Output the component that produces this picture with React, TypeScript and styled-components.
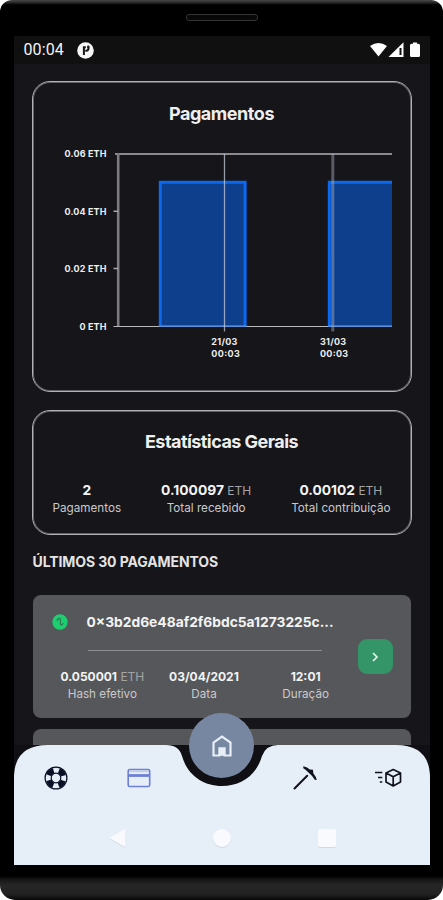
import React from "react";
import styled, { createGlobalStyle } from "styled-components";

const GlobalStyle = createGlobalStyle`
  * { box-sizing: border-box; }
  body { margin: 0; background: #fff; font-family: Inter, "Liberation Sans", sans-serif; }
`;

const Phone = styled.div`
  width: 443px;
  height: 900px;
  display: flex;
  flex-direction: column;
  align-items: center;
  background: linear-gradient(#484848 0, #303030 2px, #000 5px, #000 876px, #181818 880px, #262626 885px, #222 894px, #080808 900px);
  border-radius: 12px 12px 15px 15px;
  overflow: hidden;
`;

const Earpiece = styled.div`
  width: 72px;
  height: 7px;
  margin: 14px 0 15px;
  border: 1.5px solid #343434;
  border-radius: 3px;
  background: #080808;
`;

const Screen = styled.div`
  width: 416px;
  height: 829px;
  display: flex;
  flex-direction: column;
  background: #15151a;
  overflow: hidden;
`;

const StatusBar = styled.header`
  height: 28px;
  flex: none;
  display: flex;
  align-items: center;
  padding: 0 8px 0 9px;
  background: #101011;
  color: #f4f4f4;
`;

const Clock = styled.span`
  width: 54px;
  padding-left: 1px;
  font: 400 16px/28px Roboto, sans-serif;
  letter-spacing: 0.1px;
`;

const StatusIcons = styled.div`
  display: flex;
  align-items: center;
  margin-left: auto;
`;

const Content = styled.main`
  height: 681px;
  flex: none;
  padding: 17px 18px 0;
  overflow: hidden;
`;

const Card = styled.section<{ $height: number }>`
  height: ${(p) => p.$height}px;
  padding: 1px;
  border: 1px solid #b2b2b5;
  box-shadow: inset 0 0 0 1px #606065;
  border-radius: 18px;
  margin-bottom: 18px;
  overflow: hidden;
`;

const CardTitle = styled.h2<{ $top: number; $spacing: number }>`
  margin: ${(p) => p.$top}px 0 0;
  font-size: 18px;
  line-height: 24px;
  font-weight: 700;
  letter-spacing: ${(p) => p.$spacing}px;
  text-align: center;
  color: #eee;
`;

const Chart = styled.svg`
  display: block;
  width: 376px;
  height: 240px;
  text { font: 700 9px Inter, sans-serif; fill: #eee; }
`;

const Totals = styled.div`
  display: flex;
  justify-content: space-between;
  padding: 0 19px;
  margin-top: 27px;
`;

const StatBox = styled.div`
  display: flex;
  flex-direction: column;
  align-items: center;
  white-space: nowrap;
`;

const Value = styled.div<{ $size: number }>`
  height: 19px;
  font-size: ${(p) => p.$size}px;
  line-height: 19px;
  font-weight: 700;
  color: #f3f3f3;
`;

const Unit = styled.span`
  font-size: 12px;
  font-weight: 400;
  color: #a4a4a6;
`;

const Label = styled.div<{ $size: number }>`
  font-size: ${(p) => p.$size}px;
  line-height: 16px;
  color: #c9c9cb;
`;

const SectionTitle = styled.h3`
  margin: 0 0 24px;
  padding-left: 1px;
  font-size: 14px;
  line-height: 18px;
  font-weight: 700;
  letter-spacing: -0.1px;
  color: #e4e4e4;
`;

const PaymentCard = styled.article`
  width: 378px;
  height: 123px;
  margin: 0 1px 11px;
  padding: 0 18px;
  display: flex;
  align-items: center;
  justify-content: space-between;
  background: #56575a;
  border-radius: 8px;
`;

const PaymentBody = styled.div`
  width: 306px;
  height: 123px;
  padding-top: 17px;
`;

const HashLine = styled.div`
  height: 20px;
  display: flex;
  align-items: center;
  padding-left: 1px;
  gap: 19px;
`;

const Hash = styled.span`
  font-size: 13.8px;
  font-weight: 700;
  color: #f3f3f3;
  white-space: nowrap;
`;

const Divider = styled.div`
  width: 234px;
  height: 1px;
  margin: 18px 0 16px 37px;
  background: #8c8d8f;
`;

const PaymentStats = styled.div`
  display: grid;
  grid-template-columns: repeat(3, 1fr);
  padding-left: 1px;
`;

const OpenButton = styled.button`
  width: 35px;
  height: 35px;
  display: grid;
  place-items: center;
  padding: 0;
  border: 0;
  border-radius: 9px;
  background: #349568;
`;

const Footer = styled.footer`
  height: 120px;
  flex: none;
  position: relative;
  background: #101014;
`;

const BarShape = styled.svg`
  position: absolute;
  inset: 0;
`;

const Tabs = styled.nav`
  position: relative;
  display: grid;
  grid-template-columns: repeat(5, 83px);
  height: 65px;
  padding-left: 1px;
  align-items: center;
  justify-items: center;
`;

const HomeButton = styled.button`
  position: absolute;
  left: 175.5px;
  top: -32px;
  width: 65px;
  height: 65px;
  display: grid;
  place-items: center;
  padding: 0;
  border: 0;
  border-radius: 50%;
  background: #7786a1;
`;

const SystemNav = styled.div`
  position: relative;
  height: 55px;
  display: flex;
  justify-content: space-between;
  align-items: center;
  padding: 0 93px;
  svg { filter: drop-shadow(0 1px 0.5px #d3dae4); }
`;

interface StatProps {
  value: string;
  unit?: string;
  label: string;
  size?: number;
  labelSize?: number;
}

const Stat = ({ value, unit, label, size = 13.8, labelSize = 11.7 }: StatProps) => (
  <StatBox>
    <Value $size={size}>
      {value}
      {unit && <Unit> {unit}</Unit>}
    </Value>
    <Label $size={labelSize}>{label}</Label>
  </StatBox>
);

const yTicks = [
  { y: 154, text: "0.06 ETH", width: 42 },
  { y: 211.5, text: "0.04 ETH", width: 42 },
  { y: 269, text: "0.02 ETH", width: 42 },
  { y: 326.5, text: "0 ETH", width: 27 },
];

const PaymentsChart = () => (
  <Chart viewBox="34 126 376 240">
    <path d="M159 181H246.5V326.5H159Z" fill="#0d3f8c" />
    <path d="M328 181H392V326.5H328Z" fill="#0d3f8c" />
    <path d="M160.3 326V182.2H245V326M329.3 326V182.2H392" fill="none" stroke="#0c68ee" strokeWidth="3" />
    <path d="M115 154H392" stroke="#8b8b8e" strokeWidth="2" />
    <path d="M118.2 153V327" stroke="#7d7d80" strokeWidth="2.6" />
    <path d="M113.5 211.2H118M113.5 268.5H118" stroke="#a7a7a9" strokeWidth="1.5" />
    <path d="M113.5 326.5H392" stroke="#b8b8ba" strokeWidth="1.2" />
    <path d="M159 326H246.5M328 326H392" stroke="#3b82e8" strokeWidth="1.6" />
    <path d="M224.5 154V331.5" stroke="#c5cbd5" strokeOpacity="0.75" strokeWidth="1.3" />
    <path d="M332.8 154V331.5" stroke="#a7abb5" strokeOpacity="0.48" strokeWidth="3" />
    {yTicks.map((t) => (
      <text key={t.text} x={106.500 - t.width} y={t.y + 3.2} textLength={t.width}>{t.text}</text>
    ))}
    <text x="211.3" y="345.3" textLength="26">21/03</text>
    <text x="211.3" y="356.5" textLength="28.5">00:03</text>
    <text x="320" y="345.3" textLength="26">31/03</text>
    <text x="320" y="356.5" textLength="28">00:03</text>
  </Chart>
);

const AppBadge = () => (
  <svg width="17" height="17" viewBox="0 0 17 17">
    <circle cx="8.5" cy="8.5" r="8.3" fill="#f5f5f5" />
    <path d="M6.9 13V4.2M7 5.300H8.800M8.200 8.700H9.200Q11.600 8.700 11.600 5.500" fill="none" stroke="#151515" strokeWidth="2" />
    <circle cx="11.300" cy="4.900" r="1.300" fill="#151515" />
  </svg>
);

const DeviceStatus = () => (
  <svg width="53" height="18" viewBox="0 0 53 18">
    <path d="M1 5Q9.500 -1 18 5L9.500 15.500Z" fill="#fff" />
    <path d="M19.500 16 34.500 1.200V16Z" fill="#fff" />
    <path d="M31.500 7V14" stroke="#101011" strokeWidth="2" />
    <path d="M44 1.500H48V2.800H49.500Q51 2.800 51 4.300V14.500Q51 16 49.500 16H42.500Q41 16 41 14.500V4.300Q41 2.800 42.500 2.800H44Z" fill="#fff" />
  </svg>
);

const LinkBadge = () => (
  <svg width="16" height="16" viewBox="0 0 16 16">
    <circle cx="8" cy="8" r="7.700" fill="#1dce70" />
    <path d="M5 6.300 7 4.400Q8.800 4.200 8.400 6V10Q8.600 11.800 10.300 10.500L11 9.500" fill="none" stroke="#2b7a4e" strokeWidth="1.200" strokeLinecap="round" />
  </svg>
);

const ChevronIcon = () => (
  <svg width="10" height="12" viewBox="0 0 10 12">
    <path d="M3 2 7 6 3 10" fill="none" stroke="#e7f4ec" strokeWidth="1.700" />
  </svg>
);

const LifebuoyIcon = () => (
  <svg width="26" height="26" viewBox="0 0 26 26">
    <circle cx="13" cy="13" r="10.900" fill="#e6eef8" stroke="#0a0f25" strokeWidth="1.200" />
    <circle cx="13" cy="13" r="7.700" fill="none" stroke="#0a0f25" strokeWidth="5.400" strokeDasharray="6.800 5.294" strokeDashoffset="-2.650" />
    <circle cx="13" cy="13" r="4.800" fill="#e6eef8" stroke="#0a0f25" strokeWidth="1.200" />
  </svg>
);

const CardIcon = () => (
  <svg width="26" height="22" viewBox="0 0 26 22">
    <rect x="2.200" y="2.500" width="21.500" height="17" rx="1.500" fill="none" stroke="#6d7fd6" strokeWidth="1.600" />
    <path d="M2.500 8.500H23.500" stroke="#6d7fd6" strokeWidth="2.800" />
    <path d="M3 4.500H23" stroke="#bdc9ee" strokeWidth="1.200" />
  </svg>
);

const PickaxeIcon = () => (
  <svg width="26" height="26" viewBox="0 0 26 26">
    <path d="M2.500 23.500 15.200 10.800" stroke="#10131f" strokeWidth="2" strokeLinecap="round" />
    <path d="M11.300 1.200Q15.500 2.200 17.800 4.500L21 4.700L21.300 8.200Q24 11.500 24.800 15L22.800 14.700Q21 11.500 17.500 8.600Q14.500 5 11.300 3.300Z" fill="#10131f" />
  </svg>
);

const ShippingIcon = () => (
  <svg width="28" height="20" viewBox="0 0 28 20">
    <path d="M1 4.500H8.300M4 9.500H8.300M5.800 14H8.300" stroke="#10131f" strokeWidth="1.600" />
    <path d="M19.200 1.500 26.500 5V14L19.200 18 12 14V5ZM12 5 19.200 8.700 26.500 5M19.200 8.700V18" fill="none" stroke="#10131f" strokeWidth="1.700" strokeLinejoin="round" />
  </svg>
);

const HomeIcon = () => (
  <svg width="22" height="24" viewBox="0 0 22 24">
    <path d="M2.500 21.500V8.500L11 2.700 19.500 8.500V21.500H13.600V14.300H8.400V21.500Z" fill="none" stroke="#e8eef6" strokeWidth="2.200" />
    <path d="M9 15H13V21.800H9Z" fill="#e8eef6" />
  </svg>
);

export default function App() {
  return (
    <>
      <GlobalStyle />
      <Phone>
        <Earpiece />
        <Screen>
          <StatusBar>
            <Clock>00:04</Clock>
            <AppBadge />
            <StatusIcons><DeviceStatus /></StatusIcons>
          </StatusBar>
          <Content>
            <Card $height={311}>
              <CardTitle $top={19} $spacing={-0.45}>Pagamentos</CardTitle>
              <PaymentsChart />
            </Card>
            <Card $height={125}>
              <CardTitle $top={18} $spacing={-0.55}>Estatísticas Gerais</CardTitle>
              <Totals>
                <Stat value="2" label="Pagamentos" />
                <Stat value="0.100097" unit="ETH" label="Total recebido" />
                <Stat value="0.00102" unit="ETH" label="Total contribuição" />
              </Totals>
            </Card>
            <SectionTitle>ÚLTIMOS 30 PAGAMENTOS</SectionTitle>
            <PaymentCard>
              <PaymentBody>
                <HashLine>
                  <LinkBadge />
                  <Hash>0×3b2d6e48af2f6bdc5a1273225c...</Hash>
                </HashLine>
                <Divider />
                <PaymentStats>
                  <Stat size={12} value="0.050001" unit="ETH" label="Hash efetivo" />
                  <Stat size={12} value="03/04/2021" label="Data" />
                  <Stat size={12} value="12:01" label="Duração" />
                </PaymentStats>
              </PaymentBody>
              <OpenButton aria-label="Abrir"><ChevronIcon /></OpenButton>
            </PaymentCard>
            <PaymentCard />
          </Content>
          <Footer>
            <BarShape width="416" height="120" viewBox="0 0 416 120">
              <path d="M0 120V33Q0 0 34 0H152Q165 0 168 11C173 29 188 41 208 41S243 29 248 11Q252 0 264 0H382Q416 0 416 33V120Z" fill="#e6eef8" />
            </BarShape>
            <Tabs>
              <LifebuoyIcon />
              <CardIcon />
              <span />
              <PickaxeIcon />
              <ShippingIcon />
            </Tabs>
            <HomeButton aria-label="Início"><HomeIcon /></HomeButton>
            <SystemNav>
              <svg width="20" height="22" viewBox="0 0 20 22"><path d="M2 11 18 2V20Z" fill="#f8fafd" /></svg>
              <svg width="20" height="20" viewBox="0 0 20 20"><circle cx="10" cy="10" r="9" fill="#f8fafd" /></svg>
              <svg width="20" height="20" viewBox="0 0 20 20"><rect x="1" y="1" width="18" height="18" rx="2" fill="#f8fafd" /></svg>
            </SystemNav>
          </Footer>
        </Screen>
      </Phone>
    </>
  );
}
